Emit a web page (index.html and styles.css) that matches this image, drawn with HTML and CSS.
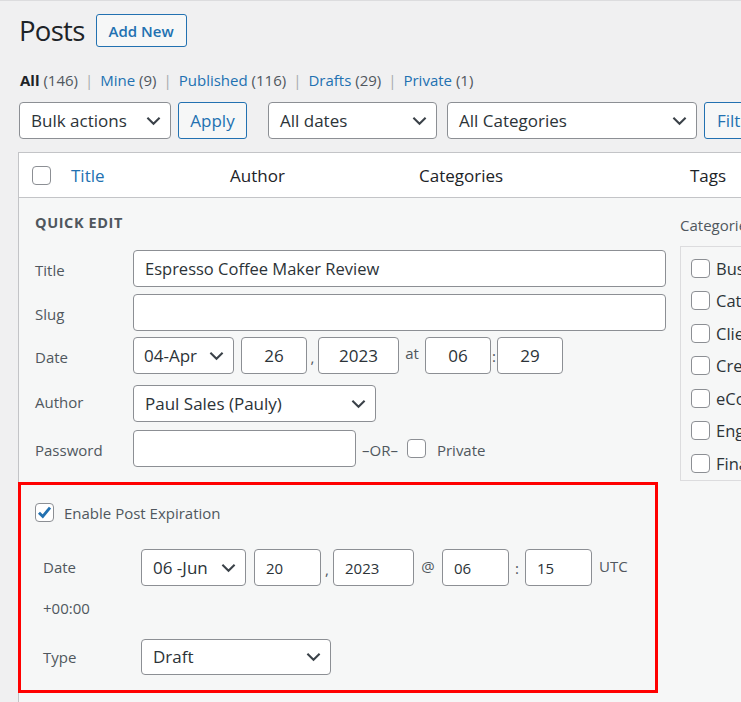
FILE: index.html
```html
<!DOCTYPE html>
<html lang="en">
<head>
<meta charset="utf-8">
<title>Posts</title>
<link rel="stylesheet" href="styles.css">
</head>
<body>
<div class="wrap">
  <div class="head">
    <h1>Posts</h1>
    <span class="btn-outline add-new">Add New</span>
  </div>

  <ul class="subsub">
    <li><b class="cur">All</b> <span class="count">(146)</span></li>
    <li class="sep">|</li>
    <li><span class="lnk">Mine</span> <span class="count">(9)</span></li>
    <li class="sep">|</li>
    <li><span class="lnk">Published</span> <span class="count">(116)</span></li>
    <li class="sep">|</li>
    <li><span class="lnk">Drafts</span> <span class="count">(29)</span></li>
    <li class="sep">|</li>
    <li><span class="lnk">Private</span> <span class="count">(1)</span></li>
  </ul>

  <div class="tablenav">
    <div class="select w-bulk"><span>Bulk actions</span><svg class="chev" viewBox="0 0 16 10"><path d="M1.5 1.5 L8 8 L14.5 1.5"/></svg></div>
    <span class="btn-outline apply">Apply</span>
    <div class="select w-dates"><span>All dates</span><svg class="chev" viewBox="0 0 16 10"><path d="M1.5 1.5 L8 8 L14.5 1.5"/></svg></div>
    <div class="select w-cats"><span>All Categories</span><svg class="chev" viewBox="0 0 16 10"><path d="M1.5 1.5 L8 8 L14.5 1.5"/></svg></div>
    <span class="btn-outline filter">Filter</span>
  </div>

  <div class="table">
    <div class="thead">
      <span class="th th-cb"><span class="cbox"></span></span>
      <span class="th lnk">Title</span>
      <span class="th">Author</span>
      <span class="th">Categories</span>
      <span class="th">Tags</span>
    </div>

    <div class="quick">
      <div class="qe-left">
        <h4 class="qe-title">QUICK EDIT</h4>

        <div class="field f-title">
          <span class="lbl">Title</span>
          <div class="input w-title">Espresso Coffee Maker Review</div>
        </div>
        <div class="field f-slug">
          <span class="lbl">Slug</span>
          <div class="input w-title"></div>
        </div>
        <div class="field f-date">
          <span class="lbl">Date</span>
          <div class="ctrls">
            <div class="select w-month"><span>04-Apr</span><svg class="chev" viewBox="0 0 16 10"><path d="M1.5 1.5 L8 8 L14.5 1.5"/></svg></div>
            <div class="input center w-day">26</div>
            <span class="punct p-comma">,</span>
            <div class="input center w-year">2023</div>
            <span class="punct p-at">at</span>
            <div class="input center w-day">06</div>
            <span class="punct p-colon">:</span>
            <div class="input center w-day">29</div>
          </div>
        </div>
        <div class="field f-author">
          <span class="lbl">Author</span>
          <div class="select w-author"><span>Paul Sales (Pauly)</span><svg class="chev" viewBox="0 0 16 10"><path d="M1.5 1.5 L8 8 L14.5 1.5"/></svg></div>
        </div>
        <div class="field f-pass">
          <span class="lbl">Password</span>
          <div class="ctrls">
            <div class="input w-pass"></div>
            <span class="or">–OR–</span>
            <span class="cbox"></span>
            <span class="private">Private</span>
          </div>
        </div>

        <div class="expire">
          <div class="exp-check">
            <span class="cbox checked"><svg viewBox="0 0 20 20"><path d="M4.2 10.2 L8.2 14.2 L15.8 4.8"/></svg></span>
            <span class="exp-label">Enable Post Expiration</span>
          </div>
          <div class="exp-row exp-date">
            <span class="lbl">Date</span>
            <div class="ctrls">
              <div class="select w-emonth"><span>06 -Jun</span><svg class="chev" viewBox="0 0 16 10"><path d="M1.5 1.5 L8 8 L14.5 1.5"/></svg></div>
              <div class="input small w-eday">20</div>
              <span class="punct e-comma">,</span>
              <div class="input small w-eyear">2023</div>
              <span class="punct e-at">@</span>
              <div class="input small w-eday">06</div>
              <span class="punct e-colon">:</span>
              <div class="input small w-eday">15</div>
              <span class="utc">UTC</span>
            </div>
          </div>
          <div class="tz">+00:00</div>
          <div class="exp-row exp-type">
            <span class="lbl">Type</span>
            <div class="select w-type"><span>Draft</span><svg class="chev" viewBox="0 0 16 10"><path d="M1.5 1.5 L8 8 L14.5 1.5"/></svg></div>
          </div>
        </div>
      </div>

      <div class="qe-right">
        <div class="cat-label">Categories</div>
        <ul class="cat-list">
          <li><span class="cbox"></span><span>Business</span></li>
          <li><span class="cbox"></span><span>Catering</span></li>
          <li><span class="cbox"></span><span>Clients</span></li>
          <li><span class="cbox"></span><span>Creative</span></li>
          <li><span class="cbox"></span><span>eCommerce</span></li>
          <li><span class="cbox"></span><span>Engineering</span></li>
          <li><span class="cbox"></span><span>Finance</span></li>
        </ul>
      </div>
    </div>
  </div>
</div>
</body>
</html>
```

FILE: styles.css
```css
* { box-sizing: border-box; }

html, body {
  margin: 0;
  padding: 0;
}

body {
  background: #f0f0f1;
  font-family: "Open Sans", "Noto Sans", sans-serif;
  color: #1d2327;
  overflow: hidden;
  width: 741px;
  height: 702px;
  border-top: 1px solid #dcdcde;
}

.wrap {
  padding-left: 19px;
  width: 800px;
}

/* heading */
.head {
  display: flex;
  align-items: center;
  gap: 11px;
  height: 33px;
  margin-top: 13px;
}

h1 {
  margin: 0;
  font-size: 27.5px;
  font-weight: 400;
  line-height: 33px;
  color: #1d2327;
  letter-spacing: -0.7px;
}

.btn-outline {
  display: inline-flex;
  align-items: center;
  justify-content: center;
  flex: none;
  border: 1px solid #2271b1;
  border-radius: 3px;
  background: #f6f7f7;
  color: #2271b1;
}

.add-new {
  width: 91px;
  height: 33px;
  font-size: 15px;
  font-weight: 600;
}

/* sub nav */
.subsub {
  list-style: none;
  margin: 23px 0 0 1px;
  padding: 0;
  display: flex;
  gap: 7px;
  font-size: 15px;
  line-height: 20px;
  height: 20px;
}

.subsub .cur { color: #1d2327; font-weight: 700; }
.count { color: #50575e; }
.lnk { color: #2271b1; }
.sep { color: #a7aaad; }

/* tablenav */
.tablenav {
  display: flex;
  align-items: center;
  height: 37px;
  margin-top: 12px;
}

.select {
  display: flex;
  align-items: center;
  justify-content: space-between;
  flex: none;
  height: 37px;
  border: 1px solid #8c8f94;
  border-radius: 4px;
  background: #fff;
  padding: 0 9px 0 11px;
  font-size: 17px;
  color: #2c3338;
  white-space: nowrap;
  overflow: hidden;
}

.chev {
  width: 15px;
  height: 10px;
  flex: none;
  fill: none;
  stroke: #3c434a;
  stroke-width: 2.2;
}

.w-bulk { width: 152px; }
.apply { width: 69px; height: 37px; margin-left: 7px; font-size: 17px; }
.w-dates { width: 169px; margin-left: 21px; }
.w-cats { width: 250px; margin-left: 10px; }
.filter { width: 70px; height: 37px; margin-left: 7px; font-size: 17px; justify-content: flex-start; padding-left: 12px; }

/* table */
.table {
  margin: 13px 0 0 -1px;
  width: 780px;
  border: 1px solid #c3c4c7;
  background: #fff;
}

.thead {
  display: grid;
  grid-template-columns: 52px 159px 189px 271px 1fr;
  align-items: center;
  height: 45px;
  border-bottom: 1px solid #c3c4c7;
  font-size: 17px;
  color: #1d2327;
}

.th-cb { display: flex; padding-left: 13px; }

.cbox {
  display: inline-block;
  flex: none;
  width: 19px;
  height: 19px;
  border: 1px solid #8c8f94;
  border-radius: 4px;
  background: #fff;
  position: relative;
}

.cbox svg {
  position: absolute;
  left: -1px;
  top: -1px;
  width: 19px;
  height: 19px;
  fill: none;
  stroke: #2271b1;
  stroke-width: 3;
}

/* quick edit */
.quick {
  display: flex;
  background: #f6f7f7;
  padding-top: 15px;
  height: 504px;
}

.qe-left {
  width: 650px;
  flex: none;
}

.qe-title {
  margin: 0 0 17px 16px;
  font-size: 14.5px;
  line-height: 20px;
  font-weight: 700;
  color: #50575e;
  letter-spacing: 0.6px;
}

.field {
  display: flex;
  align-items: center;
  padding-left: 16px;
  height: 37px;
}

.lbl {
  width: 98px;
  flex: none;
  font-size: 15px;
  color: #50575e;
}

.field .lbl { padding-top: 3px; }
.f-author .lbl { padding-top: 0; margin-top: -3px; }

.f-slug { margin-top: 7px; }
.f-date { margin-top: 6px; }
.f-author { margin-top: 11px; }
.f-pass { margin-top: 8px; }

.ctrls {
  display: flex;
  align-items: center;
}

.input {
  display: flex;
  align-items: center;
  flex: none;
  height: 37px;
  border: 1px solid #8c8f94;
  border-radius: 4px;
  background: #fff;
  padding: 0 11px;
  font-size: 17px;
  color: #2c3338;
  white-space: nowrap;
}

.input.center { justify-content: center; }

.w-title { width: 533px; font-size: 16.5px; }
.w-month { width: 101px; padding-left: 10px; margin-right: 7px; }
.w-day { width: 66px; }
.w-year { width: 81px; }

.punct {
  font-size: 15px;
  color: #50575e;
  text-align: center;
  flex: none;
}

.p-comma { width: 11px; padding-top: 2px; }
.p-at { width: 26px; margin-top: -5px; }
.p-colon { width: 6px; }

.w-author { width: 243px; }
.w-pass { width: 223px; }

.or {
  font-size: 15px;
  color: #50575e;
  margin: 0 9px 0 6px;
  padding-top: 3px;
}

.private {
  font-size: 15px;
  color: #50575e;
  margin-left: 11px;
  padding-top: 3px;
}

/* expiration box */
.expire {
  margin: 15px 0 0 -1px;
  width: 640px;
  height: 211px;
  border: 3px solid #f00;
  padding: 18px 0 0 14px;
}

.exp-check {
  display: flex;
  align-items: center;
  height: 19px;
  gap: 10px;
}

.exp-label {
  font-size: 15px;
  color: #50575e;
}

.exp-row {
  display: flex;
  align-items: center;
  height: 37px;
  padding-left: 8px;
}

.exp-row .lbl { font-size: 15px; }

.exp-date { margin-top: 27px; }
.exp-date .lbl { margin-top: -2px; }

.w-emonth { width: 105px; padding-left: 11px; margin-right: 8px; }
.input.small { font-size: 15px; }
.w-eday { width: 67px; }
.w-eyear { width: 81px; }

.e-comma { width: 12px; padding-top: 3px; }
.e-at { width: 28px; margin-top: -4px; }
.e-colon { width: 16px; }

.utc {
  font-size: 15px;
  color: #50575e;
  margin-left: 7px;
  margin-top: -3px;
}

.tz {
  font-size: 15px;
  line-height: 20px;
  color: #50575e;
  margin: 12px 0 0 8px;
}

.exp-type { margin-top: 20px; }
.w-type { width: 190px; height: 36px; padding-left: 11px; }

/* categories */
.qe-right {
  margin-left: 11px;
  flex: 1;
}

.cat-label {
  font-size: 15px;
  line-height: 20px;
  color: #50575e;
  margin-top: 2px;
}

.cat-list {
  list-style: none;
  margin: 11px 0 0 0;
  padding: 5px 0 0 10px;
  height: 235px;
  border: 1px solid #dcdcde;
  background: #f6f7f7;
}

.cat-list li {
  display: flex;
  align-items: center;
  height: 32.5px;
  gap: 6px;
  font-size: 16.5px;
  color: #2c3338;
}
```
